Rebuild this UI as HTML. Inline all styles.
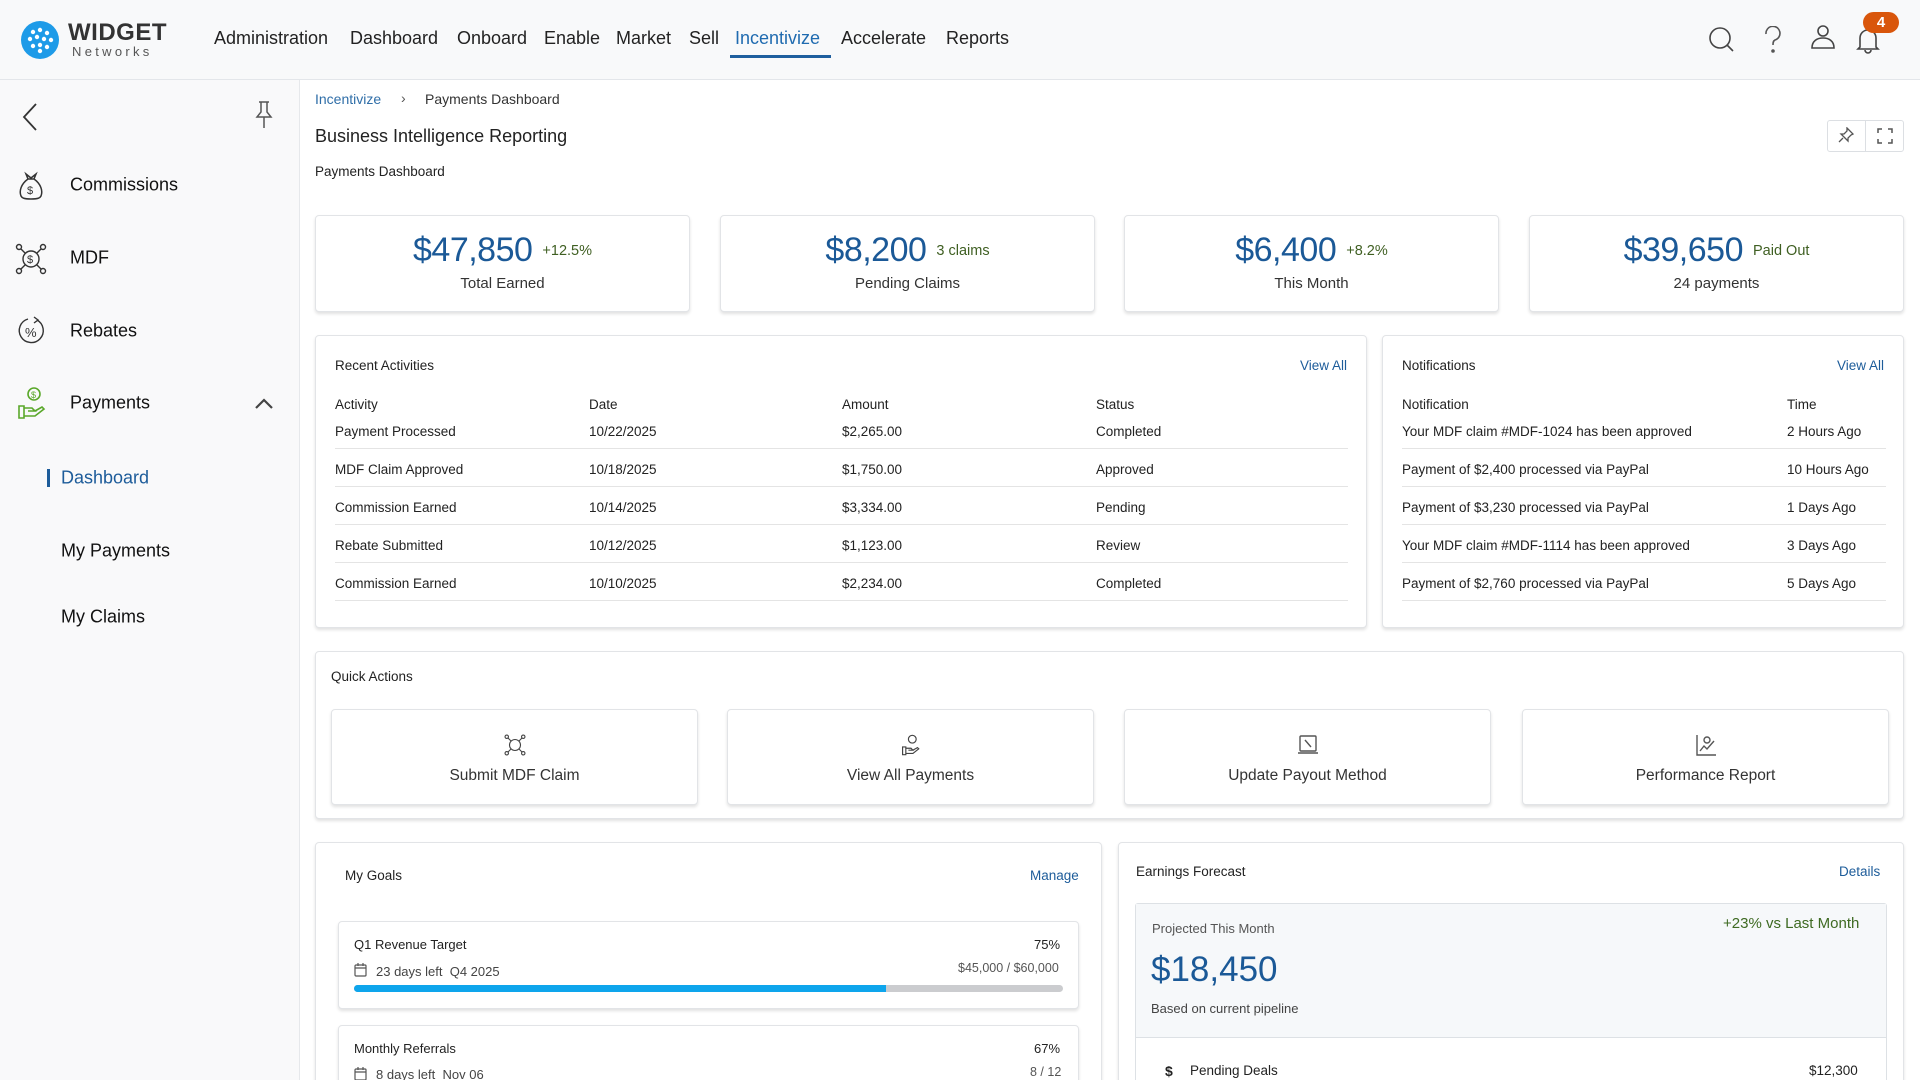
<!DOCTYPE html>
<html><head><meta charset="utf-8"><style>
*{box-sizing:border-box;margin:0;padding:0}
html,body{width:1920px;height:1080px;overflow:hidden}
body{font-family:"Liberation Sans",sans-serif;color:#222;background:#fff}
#wrap{position:relative;width:1920px;height:1080px;overflow:hidden}
.abs{position:absolute}
.hdr{left:0;top:0;width:1920px;height:80px;background:#f8f9fa;border-bottom:1px solid #e3e6ea}
.nav{top:28px;font-size:18px;color:#222;white-space:nowrap}
.side{left:0;top:80px;width:300px;height:1000px;background:#f9f9fa;border-right:1px solid #e6e8eb}
.si{left:70px;font-size:18px;color:#111;transform:translateY(-50%)}
.card{background:#fff;border:1px solid #e2e4e7;border-radius:4px;box-shadow:0 2px 3px rgba(0,0,0,.12)}
.kpi{top:215px;width:375px;height:97px;text-align:center}
.kpi .n{position:absolute;top:15px;left:0;width:100%;font-size:34px;color:#1b5997;letter-spacing:-0.5px}
.kpi .n small{font-size:14.5px;color:#3f5f22;margin-left:10px;vertical-align:6px;letter-spacing:0}
.kpi .l{position:absolute;top:59px;left:0;width:100%;font-size:15px;color:#333}
.t13{font-size:13.5px;color:#222}
.row{position:absolute;left:0;width:100%;height:38px;border-bottom:1px solid #e4e4e4}
.blue{color:#1d5c9a}
.qa{top:709px;width:367px;height:96px;text-align:center}
.qa .lb{position:absolute;top:57px;width:100%;font-size:15.5px;color:#333}
.qa svg{position:absolute;top:24px;left:50%;margin-left:-11px}
</style></head><body><div id="wrap">
<div class="abs hdr"></div>
<svg class="abs" style="left:20px;top:20px" width="40" height="40" viewBox="0 0 40 40"><circle cx="20" cy="20" r="19" fill="#1e9be8"/><g fill="#fff"><circle cx="13" cy="12" r="2.2"/><circle cx="20" cy="10" r="2.2"/><circle cx="27" cy="13" r="2.2"/><circle cx="10" cy="19" r="2.2"/><circle cx="17" cy="17" r="2.2"/><circle cx="24" cy="19" r="2.2"/><circle cx="31" cy="20" r="2.2"/><circle cx="13" cy="26" r="2.2"/><circle cx="20" cy="25" r="2.2"/><circle cx="27" cy="27" r="2.2"/><circle cx="20" cy="31" r="2.2"/></g></svg>
<div class="abs" style="left:68px;top:19px;font-size:24px;font-weight:bold;color:#333;letter-spacing:0.5px">WIDGET</div>
<div class="abs" style="left:72px;top:44px;font-size:13px;color:#555;letter-spacing:3.3px">Networks</div>
<div class="abs nav" style="left:214px">Administration</div>
<div class="abs nav" style="left:350px">Dashboard</div>
<div class="abs nav" style="left:457px">Onboard</div>
<div class="abs nav" style="left:544px">Enable</div>
<div class="abs nav" style="left:616px">Market</div>
<div class="abs nav" style="left:689px">Sell</div>
<div class="abs nav" style="left:735px;color:#1f6bb0">Incentivize</div>
<div class="abs" style="left:730px;top:55px;width:101px;height:3px;background:#1f5f9e"></div>
<div class="abs nav" style="left:841px">Accelerate</div>
<div class="abs nav" style="left:946px">Reports</div>
<svg class="abs" style="left:1708px;top:26px" width="28" height="28" viewBox="0 0 28 28" fill="none" stroke="#444" stroke-width="1.6"><circle cx="12" cy="12" r="10"/><path d="M19 19l6 6"/></svg>
<svg class="abs" style="left:1763px;top:26px" width="20" height="28" viewBox="0 0 20 28" fill="none" stroke="#555" stroke-width="1.6"><path d="M3 8a7 7 0 1 1 9 6c-2 1-2 3-2 5"/><circle cx="10" cy="25" r="1" fill="#555"/></svg>
<svg class="abs" style="left:1809px;top:23px" width="28" height="28" viewBox="0 0 28 28" fill="none" stroke="#444" stroke-width="1.6"><circle cx="14" cy="8" r="5"/><path d="M3 25c0-7 5-10 11-10s11 3 11 10z"/></svg>
<svg class="abs" style="left:1855px;top:26px" width="26" height="28" viewBox="0 0 26 28" fill="none" stroke="#444" stroke-width="1.6"><path d="M5 21V12a8 8 0 0 1 16 0v9l2 2H3z"/><path d="M10 24a3 3 0 0 0 6 0"/></svg>
<div class="abs" style="left:1863px;top:12px;width:36px;height:21px;border-radius:11px;background:#d9560b;color:#fff;font-weight:bold;font-size:15px;text-align:center;line-height:21px">4</div>

<div class="abs side"></div>
<svg class="abs" style="left:20px;top:102px" width="20" height="30" viewBox="0 0 20 30" fill="none" stroke="#333" stroke-width="1.8"><path d="M16 2L4 15l12 13"/></svg>
<svg class="abs" style="left:254px;top:100px" width="20" height="30" viewBox="0 0 20 30" fill="none" stroke="#555" stroke-width="1.5"><path d="M5 2h10M7 2v10l-4 5h14l-4-5V2M10 17v11"/></svg>
<svg class="abs" style="left:17px;top:171px" width="28" height="30" viewBox="0 0 28 30" fill="none" stroke="#333" stroke-width="1.5"><path d="M9 3l5 4 5-4-2 5h-6zM11 8C4 13 2 20 4 25c1 2 3 3 10 3s9-1 10-3c2-5 0-12-7-17"/><text x="10" y="23" font-size="11" fill="#333" stroke="none" font-family="Liberation Sans">$</text></svg>
<div class="abs si" style="top:185px">Commissions</div>
<svg class="abs" style="left:15px;top:243px" width="32" height="32" viewBox="0 0 32 32" fill="none" stroke="#333" stroke-width="1.4"><circle cx="16" cy="16" r="8"/><circle cx="4" cy="4" r="2.5"/><circle cx="28" cy="4" r="2.5"/><circle cx="4" cy="28" r="2.5"/><circle cx="28" cy="28" r="2.5"/><path d="M6 6l4 4M26 6l-4 4M6 26l4-4M26 26l-4-4"/><text x="12" y="20" font-size="11" fill="#333" stroke="none" font-family="Liberation Sans">$</text></svg>
<div class="abs si" style="top:258px">MDF</div>
<svg class="abs" style="left:17px;top:316px" width="30" height="30" viewBox="0 0 30 30" fill="none" stroke="#333" stroke-width="1.4"><path d="M20 4a12 12 0 1 1-9-1M17 1l4 3-4 3"/><text x="8" y="21" font-size="13" fill="#333" stroke="none" font-family="Liberation Sans">%</text></svg>
<div class="abs si" style="top:331px">Rebates</div>
<svg class="abs" style="left:17px;top:386px" width="30" height="34" viewBox="0 0 30 34" fill="none" stroke="#5aa82a" stroke-width="1.6"><circle cx="17" cy="8" r="6"/><path d="M2 20h5v12H2zM7 22h8l3 3h-7M7 30h11l9-7-2-2-7 4"/><text x="14" y="12" font-size="9" fill="#5aa82a" stroke="none" font-family="Liberation Sans">$</text></svg>
<div class="abs si" style="top:403px">Payments</div>
<svg class="abs" style="left:254px;top:396px" width="20" height="14" viewBox="0 0 20 14" fill="none" stroke="#444" stroke-width="2.2"><path d="M2 12l8-8 8 8"/></svg>
<div class="abs" style="left:47px;top:469px;width:3px;height:18px;background:#1d5c9a"></div>
<div class="abs si" style="left:61px;top:478px;color:#1d5c9a">Dashboard</div>
<div class="abs si" style="left:61px;top:551px">My Payments</div>
<div class="abs si" style="left:61px;top:617px">My Claims</div>

<div class="abs" style="left:315px;top:91px;font-size:14px;color:#2f6ea8">Incentivize</div>
<div class="abs" style="left:401px;top:90px;font-size:14px;color:#555">›</div>
<div class="abs" style="left:425px;top:91px;font-size:14px;color:#333">Payments Dashboard</div>
<div class="abs" style="left:315px;top:126px;font-size:18px;color:#222">Business Intelligence Reporting</div>
<div class="abs" style="left:315px;top:164px;font-size:13.5px;color:#222">Payments Dashboard</div>
<div class="abs" style="left:1827px;top:120px;width:77px;height:32px;border:1px solid #dcdfe3;border-radius:3px;background:#fff"></div>
<div class="abs" style="left:1865px;top:121px;width:1px;height:30px;background:#dcdfe3"></div>
<svg class="abs" style="left:1838px;top:127px" width="16" height="16" viewBox="0 0 16 16" fill="none" stroke="#555" stroke-width="1.3"><path d="M9 1l6 6-2 1-3 3 0 3-7-7 3 0 3-3zM5 11l-4 4"/></svg>
<svg class="abs" style="left:1877px;top:128px" width="16" height="16" viewBox="0 0 16 16" fill="none" stroke="#555" stroke-width="1.5"><path d="M1 5V1h4M11 1h4v4M15 11v4h-4M5 15H1v-4"/></svg>

<div class="abs card kpi" style="left:315px"><div class="n">$47,850<small>+12.5%</small></div><div class="l">Total Earned</div></div>
<div class="abs card kpi" style="left:720px"><div class="n">$8,200<small>3 claims</small></div><div class="l">Pending Claims</div></div>
<div class="abs card kpi" style="left:1124px"><div class="n">$6,400<small>+8.2%</small></div><div class="l">This Month</div></div>
<div class="abs card kpi" style="left:1529px"><div class="n">$39,650<small>Paid Out</small></div><div class="l">24 payments</div></div>

<div class="abs card" style="left:315px;top:335px;width:1052px;height:293px">
 <div class="abs t13" style="left:19px;top:22px">Recent Activities</div>
 <div class="abs t13 blue" style="right:19px;top:22px">View All</div>
 <div class="abs" style="left:19px;top:61px;width:1013px;height:220px">
  <div class="abs t13" style="left:0;top:0">Activity</div><div class="abs t13" style="left:254px;top:0">Date</div><div class="abs t13" style="left:507px;top:0">Amount</div><div class="abs t13" style="left:761px;top:0">Status</div>
  <div class="row t13" style="top:14px"><span class="abs" style="left:0;top:13px">Payment Processed</span><span class="abs" style="left:254px;top:13px">10/22/2025</span><span class="abs" style="left:507px;top:13px">$2,265.00</span><span class="abs" style="left:761px;top:13px">Completed</span></div>
  <div class="row t13" style="top:52px"><span class="abs" style="left:0;top:13px">MDF Claim Approved</span><span class="abs" style="left:254px;top:13px">10/18/2025</span><span class="abs" style="left:507px;top:13px">$1,750.00</span><span class="abs" style="left:761px;top:13px">Approved</span></div>
  <div class="row t13" style="top:90px"><span class="abs" style="left:0;top:13px">Commission Earned</span><span class="abs" style="left:254px;top:13px">10/14/2025</span><span class="abs" style="left:507px;top:13px">$3,334.00</span><span class="abs" style="left:761px;top:13px">Pending</span></div>
  <div class="row t13" style="top:128px"><span class="abs" style="left:0;top:13px">Rebate Submitted</span><span class="abs" style="left:254px;top:13px">10/12/2025</span><span class="abs" style="left:507px;top:13px">$1,123.00</span><span class="abs" style="left:761px;top:13px">Review</span></div>
  <div class="row t13" style="top:166px"><span class="abs" style="left:0;top:13px">Commission Earned</span><span class="abs" style="left:254px;top:13px">10/10/2025</span><span class="abs" style="left:507px;top:13px">$2,234.00</span><span class="abs" style="left:761px;top:13px">Completed</span></div>
 </div>
</div>
<div class="abs card" style="left:1382px;top:335px;width:522px;height:293px">
 <div class="abs t13" style="left:19px;top:22px">Notifications</div>
 <div class="abs t13 blue" style="right:19px;top:22px">View All</div>
 <div class="abs" style="left:19px;top:61px;width:484px;height:220px">
  <div class="abs t13" style="left:0;top:0">Notification</div><div class="abs t13" style="left:385px;top:0">Time</div>
  <div class="row t13" style="top:14px"><span class="abs" style="left:0;top:13px">Your MDF claim #MDF-1024 has been approved</span><span class="abs" style="left:385px;top:13px">2 Hours Ago</span></div>
  <div class="row t13" style="top:52px"><span class="abs" style="left:0;top:13px">Payment of $2,400 processed via PayPal</span><span class="abs" style="left:385px;top:13px">10 Hours Ago</span></div>
  <div class="row t13" style="top:90px"><span class="abs" style="left:0;top:13px">Payment of $3,230 processed via PayPal</span><span class="abs" style="left:385px;top:13px">1 Days Ago</span></div>
  <div class="row t13" style="top:128px"><span class="abs" style="left:0;top:13px">Your MDF claim #MDF-1114 has been approved</span><span class="abs" style="left:385px;top:13px">3 Days Ago</span></div>
  <div class="row t13" style="top:166px"><span class="abs" style="left:0;top:13px">Payment of $2,760 processed via PayPal</span><span class="abs" style="left:385px;top:13px">5 Days Ago</span></div>
 </div>
</div>

<div class="abs card" style="left:315px;top:651px;width:1589px;height:168px"></div>
<div class="abs t13" style="left:331px;top:669px">Quick Actions</div>
<div class="abs card qa" style="left:331px"><svg width="22" height="22" viewBox="0 0 32 32" fill="none" stroke="#444" stroke-width="1.6"><circle cx="16" cy="16" r="8"/><circle cx="4" cy="4" r="2.5"/><circle cx="28" cy="4" r="2.5"/><circle cx="4" cy="28" r="2.5"/><circle cx="28" cy="28" r="2.5"/><path d="M6 6l4 4M26 6l-4 4M6 26l4-4M26 26l-4-4"/></svg><div class="lb">Submit MDF Claim</div></div>
<div class="abs card qa" style="left:727px"><svg width="22" height="22" viewBox="0 0 30 34" fill="none" stroke="#444" stroke-width="1.8"><circle cx="17" cy="8" r="6"/><path d="M2 20h5v12H2zM7 22h8l3 3h-7M7 30h11l9-7-2-2-7 4"/></svg><div class="lb">View All Payments</div></div>
<div class="abs card qa" style="left:1124px"><svg width="22" height="22" viewBox="0 0 22 22" fill="none" stroke="#555" stroke-width="1.4"><rect x="3" y="2" width="16" height="15" rx="1"/><path d="M1 19h20M8 6l6 7"/></svg><div class="lb">Update Payout Method</div></div>
<div class="abs card qa" style="left:1522px"><svg width="22" height="22" viewBox="0 0 22 22" fill="none" stroke="#555" stroke-width="1.4"><path d="M2 1v20h19M5 17l4-5 3 3 7-8"/><circle cx="12" cy="6" r="3"/></svg><div class="lb">Performance Report</div></div>

<div class="abs card" style="left:315px;top:842px;width:787px;height:260px"></div>
<div class="abs t13" style="left:345px;top:868px">My Goals</div>
<div class="abs t13 blue" style="left:1030px;top:868px">Manage</div>
<div class="abs card" style="left:338px;top:921px;width:741px;height:88px"></div>
<div class="abs t13" style="left:354px;top:937px;font-size:13px">Q1 Revenue Target</div>
<div class="abs t13" style="left:1034px;top:937px;font-size:13px">75%</div>
<svg class="abs" style="left:354px;top:963px" width="13" height="14" viewBox="0 0 13 14" fill="none" stroke="#555" stroke-width="1.2"><rect x="1" y="2" width="11" height="11" rx="1"/><path d="M1 5h11M4 0v3M9 0v3"/></svg>
<div class="abs" style="left:376px;top:964px;font-size:13px;color:#444">23 days left &nbsp;Q4 2025</div>
<div class="abs" style="left:958px;top:961px;font-size:12.5px;color:#555">$45,000 / $60,000</div>
<div class="abs" style="left:354px;top:985px;width:709px;height:7px;border-radius:4px;background:#cbcccf"></div>
<div class="abs" style="left:354px;top:985px;width:532px;height:7px;border-radius:4px 0 0 4px;background:#0ea5ec"></div>
<div class="abs card" style="left:338px;top:1025px;width:741px;height:88px"></div>
<div class="abs t13" style="left:354px;top:1041px;font-size:13px">Monthly Referrals</div>
<div class="abs t13" style="left:1034px;top:1041px;font-size:13px">67%</div>
<svg class="abs" style="left:354px;top:1067px" width="13" height="14" viewBox="0 0 13 14" fill="none" stroke="#555" stroke-width="1.2"><rect x="1" y="2" width="11" height="11" rx="1"/><path d="M1 5h11M4 0v3M9 0v3"/></svg>
<div class="abs" style="left:376px;top:1067px;font-size:13px;color:#444">8 days left &nbsp;Nov 06</div>
<div class="abs" style="left:1030px;top:1065px;font-size:12.5px;color:#555">8 / 12</div>

<div class="abs card" style="left:1118px;top:842px;width:786px;height:260px"></div>
<div class="abs t13" style="left:1136px;top:864px">Earnings Forecast</div>
<div class="abs t13 blue" style="left:1839px;top:864px">Details</div>
<div class="abs" style="left:1135px;top:903px;width:752px;height:200px;border:1px solid #dde1e5;border-radius:3px;background:#fff"></div>
<div class="abs" style="left:1136px;top:904px;width:750px;height:134px;background:#f6f8fa;border-bottom:1px solid #dde1e5"></div>
<div class="abs" style="left:1152px;top:921px;font-size:13px;color:#555">Projected This Month</div>
<div class="abs" style="left:1723px;top:915px;font-size:15px;color:#3e6a22">+23% vs Last Month</div>
<div class="abs" style="left:1151px;top:950px;font-size:35px;color:#1b5997">$18,450</div>
<div class="abs" style="left:1151px;top:1001px;font-size:13px;color:#444">Based on current pipeline</div>
<div class="abs" style="left:1165px;top:1063px;font-size:14px;color:#222;font-weight:bold">$</div>
<div class="abs" style="left:1190px;top:1063px;font-size:13.5px;color:#222">Pending Deals</div>
<div class="abs" style="left:1809px;top:1063px;font-size:13.5px;color:#222">$12,300</div>
</div></body></html>
